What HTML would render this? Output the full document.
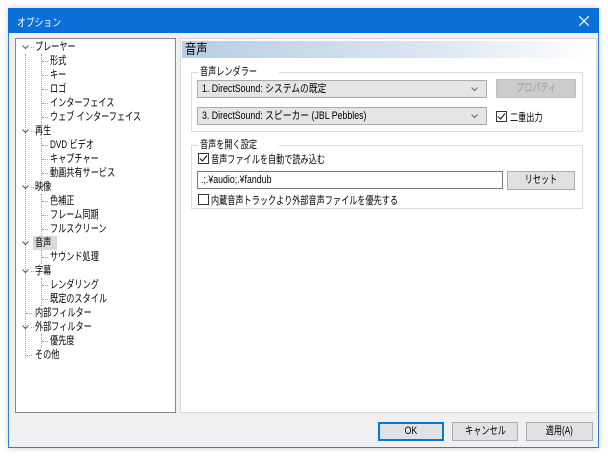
<!DOCTYPE html><html><head><meta charset="utf-8"><style>
*{box-sizing:border-box}
body{margin:0;width:608px;height:458px;background:#fff;font-family:"Liberation Sans","Noto Sans CJK JP",sans-serif;font-size:11px;color:#000;position:relative;overflow:hidden}
.a{position:absolute}
.s{display:inline-block;transform:scaleX(.74);transform-origin:0 50%;white-space:nowrap}
.m{display:inline-block;transform:scaleX(.8);transform-origin:0 50%;white-space:nowrap}
.win{left:8px;top:8px;width:591px;height:440px;background:#f0f0f0;border:1px solid #2a7fd4;box-shadow:0 0 6px rgba(0,0,0,.2)}
.title{left:8px;top:8px;width:591px;height:25px;background:#0a6fd6;color:#fff;font-size:11px;padding:6px 0 0 9px}
.tree{left:15px;top:38px;width:161px;height:375px;background:#fff;border:1px solid #828790}
.panel{left:180px;top:38px;width:417px;height:375px;background:#fff;border:1px solid #d9d9d9}
.row{position:absolute;height:14px;line-height:14px;white-space:nowrap}
.vl{position:absolute;border-left:1px dotted #a0a0a0;width:0}
.hl{position:absolute;border-top:1px dotted #a0a0a0;width:6px;height:0}
.chev{position:absolute;width:7px;height:5px}
.grp{position:absolute;border:1px solid #dcdcdc;}
.grp span.l{position:absolute;top:-8px;left:6px;background:#fff;padding:0 2px;color:#000;line-height:14px}
.dd{position:absolute;height:18px;background:#e5e5e5;border:1px solid #acacac;padding:2px 4px;line-height:12px}
.btn{position:absolute;height:19px;background:#e1e1e1;border:1px solid #adadad;text-align:center;line-height:17px}
.cb{position:absolute;width:11px;height:11px;border:1px solid #333;background:#fff}
</style></head><body>
<div class="a win"></div>
<div class="a title"><span class="m">オプション</span>
<svg style="position:absolute;right:10px;top:8px" width="10" height="10"><path d="M0 0L10 10M10 0L0 10" stroke="#fff" stroke-width="1.2"/></svg></div>
<div class="a tree"></div>
<div class="a" style="left:15px;top:38px;width:160px;height:375px">
<div class="vl" style="left:10px;top:16px;height:304px"></div>
<div class="vl" style="left:26px;top:16px;height:70px"></div>
<div class="vl" style="left:26px;top:100px;height:42px"></div>
<div class="vl" style="left:26px;top:156px;height:42px"></div>
<div class="vl" style="left:26px;top:212px;height:14px"></div>
<div class="vl" style="left:26px;top:240px;height:28px"></div>
<div class="vl" style="left:26px;top:296px;height:14px"></div>
<div style="position:absolute;left:0;top:2px;width:160px">
<svg class="chev" style="left:7px;top:5px" viewBox="0 0 7 5"><path d="M0.5 0.5L3.5 3.5L6.5 0.5" fill="none" stroke="#555"/></svg><div class="hl" style="left:16px;top:7px;width:3px"></div><div class="row" style="top:0;left:20px"><span class="s">プレーヤー</span></div>
<div class="hl" style="left:27px;top:21px"></div><div class="row" style="top:14px;left:35px"><span class="s">形式</span></div>
<div class="hl" style="left:27px;top:35px"></div><div class="row" style="top:28px;left:35px"><span class="s">キー</span></div>
<div class="hl" style="left:27px;top:49px"></div><div class="row" style="top:42px;left:35px"><span class="s">ロゴ</span></div>
<div class="hl" style="left:27px;top:63px"></div><div class="row" style="top:56px;left:35px"><span class="s">インターフェイス</span></div>
<div class="hl" style="left:27px;top:77px"></div><div class="row" style="top:70px;left:35px"><span class="s">ウェブ インターフェイス</span></div>
<svg class="chev" style="left:7px;top:89px" viewBox="0 0 7 5"><path d="M0.5 0.5L3.5 3.5L6.5 0.5" fill="none" stroke="#555"/></svg><div class="hl" style="left:16px;top:91px;width:3px"></div><div class="row" style="top:84px;left:20px"><span class="s">再生</span></div>
<div class="hl" style="left:27px;top:105px"></div><div class="row" style="top:98px;left:35px"><span class="s">DVD ビデオ</span></div>
<div class="hl" style="left:27px;top:119px"></div><div class="row" style="top:112px;left:35px"><span class="s">キャプチャー</span></div>
<div class="hl" style="left:27px;top:133px"></div><div class="row" style="top:126px;left:35px"><span class="s">動画共有サービス</span></div>
<svg class="chev" style="left:7px;top:145px" viewBox="0 0 7 5"><path d="M0.5 0.5L3.5 3.5L6.5 0.5" fill="none" stroke="#555"/></svg><div class="hl" style="left:16px;top:147px;width:3px"></div><div class="row" style="top:140px;left:20px"><span class="s">映像</span></div>
<div class="hl" style="left:27px;top:161px"></div><div class="row" style="top:154px;left:35px"><span class="s">色補正</span></div>
<div class="hl" style="left:27px;top:175px"></div><div class="row" style="top:168px;left:35px"><span class="s">フレーム同期</span></div>
<div class="hl" style="left:27px;top:189px"></div><div class="row" style="top:182px;left:35px"><span class="s">フルスクリーン</span></div>
<svg class="chev" style="left:7px;top:201px" viewBox="0 0 7 5"><path d="M0.5 0.5L3.5 3.5L6.5 0.5" fill="none" stroke="#555"/></svg><div class="row" style="top:196px;left:18px;width:24px;background:#d9d9d9"></div><div class="row" style="top:196px;left:20px"><span class="s">音声</span></div>
<div class="hl" style="left:27px;top:217px"></div><div class="row" style="top:210px;left:35px"><span class="s">サウンド処理</span></div>
<svg class="chev" style="left:7px;top:229px" viewBox="0 0 7 5"><path d="M0.5 0.5L3.5 3.5L6.5 0.5" fill="none" stroke="#555"/></svg><div class="hl" style="left:16px;top:231px;width:3px"></div><div class="row" style="top:224px;left:20px"><span class="s">字幕</span></div>
<div class="hl" style="left:27px;top:245px"></div><div class="row" style="top:238px;left:35px"><span class="s">レンダリング</span></div>
<div class="hl" style="left:27px;top:259px"></div><div class="row" style="top:252px;left:35px"><span class="s">既定のスタイル</span></div>
<div class="hl" style="left:11px;top:273px"></div><div class="row" style="top:266px;left:20px"><span class="s">内部フィルター</span></div>
<svg class="chev" style="left:7px;top:285px" viewBox="0 0 7 5"><path d="M0.5 0.5L3.5 3.5L6.5 0.5" fill="none" stroke="#555"/></svg><div class="hl" style="left:16px;top:287px;width:3px"></div><div class="row" style="top:280px;left:20px"><span class="s">外部フィルター</span></div>
<div class="hl" style="left:27px;top:301px"></div><div class="row" style="top:294px;left:35px"><span class="s">優先度</span></div>
<div class="hl" style="left:11px;top:315px"></div><div class="row" style="top:308px;left:20px"><span class="s">その他</span></div>
</div></div>
<div class="a panel"></div>
<div class="a" style="left:182px;top:41px;width:413px;height:17px;background:linear-gradient(90deg,#b8cde3,#dbe6f2 60%,#fff);font-size:14px;line-height:17px;padding-left:3px"><span class="m">音声</span></div>
<div class="grp" style="left:191px;top:72px;width:392px;height:60px"><span class="l"><span class="s">音声レンダラー</span></span></div>
<div class="dd" style="left:197px;top:80px;width:290px"><span class="m">1. DirectSound: システムの既定</span></div>
<svg class="a" style="left:471px;top:87px" width="7" height="5"><path d="M0.5 0.5L3.5 3.5L6.5 0.5" fill="none" stroke="#666"/></svg>
<div class="btn" style="left:496px;top:79px;width:80px;color:#999;background:#ccc;border-color:#bfbfbf"><span class="s" style="transform-origin:50% 50%">プロパティ</span></div>
<div class="dd" style="left:197px;top:107px;width:290px"><span class="m">3. DirectSound: スピーカー (JBL Pebbles)</span></div>
<svg class="a" style="left:471px;top:114px" width="7" height="5"><path d="M0.5 0.5L3.5 3.5L6.5 0.5" fill="none" stroke="#666"/></svg>
<div class="cb" style="left:496px;top:111px"><svg width="9" height="9" style="display:block"><path d="M1 4.5L3.5 7L8 1.5" fill="none" stroke="#222" stroke-width="1.2"/></svg></div><div class="a" style="left:510px;top:109px"><span class="s">二重出力</span></div>
<div class="grp" style="left:191px;top:145px;width:392px;height:64px"><span class="l"><span class="s">音声を開く設定</span></span></div>
<div class="cb" style="left:198px;top:153px"><svg width="9" height="9" style="display:block"><path d="M1 4.5L3.5 7L8 1.5" fill="none" stroke="#222" stroke-width="1.2"/></svg></div><div class="a" style="left:211px;top:151px"><span class="s">音声ファイルを自動で読み込む</span></div>
<div class="a" style="left:197px;top:171px;width:306px;height:18px;border:1px solid #7a7a7a;padding:2px 3px;line-height:12px"><span class="m">.;.¥audio;.¥fandub</span></div>
<div class="btn" style="left:507px;top:171px;width:68px"><span class="s" style="transform-origin:50% 50%">リセット</span></div>
<div class="cb" style="left:198px;top:194px"></div><div class="a" style="left:211px;top:192px"><span class="s">内蔵音声トラックより外部音声ファイルを優先する</span></div>
<div class="btn" style="left:378px;top:422px;width:66px;border:2px solid #0078d7;line-height:15px"><span class="m" style="transform-origin:50% 50%">OK</span></div>
<div class="btn" style="left:452px;top:422px;width:66px"><span class="s" style="transform-origin:50% 50%">キャンセル</span></div>
<div class="btn" style="left:526px;top:422px;width:67px"><span class="s" style="transform-origin:50% 50%">適用(A)</span></div>
</body></html>
